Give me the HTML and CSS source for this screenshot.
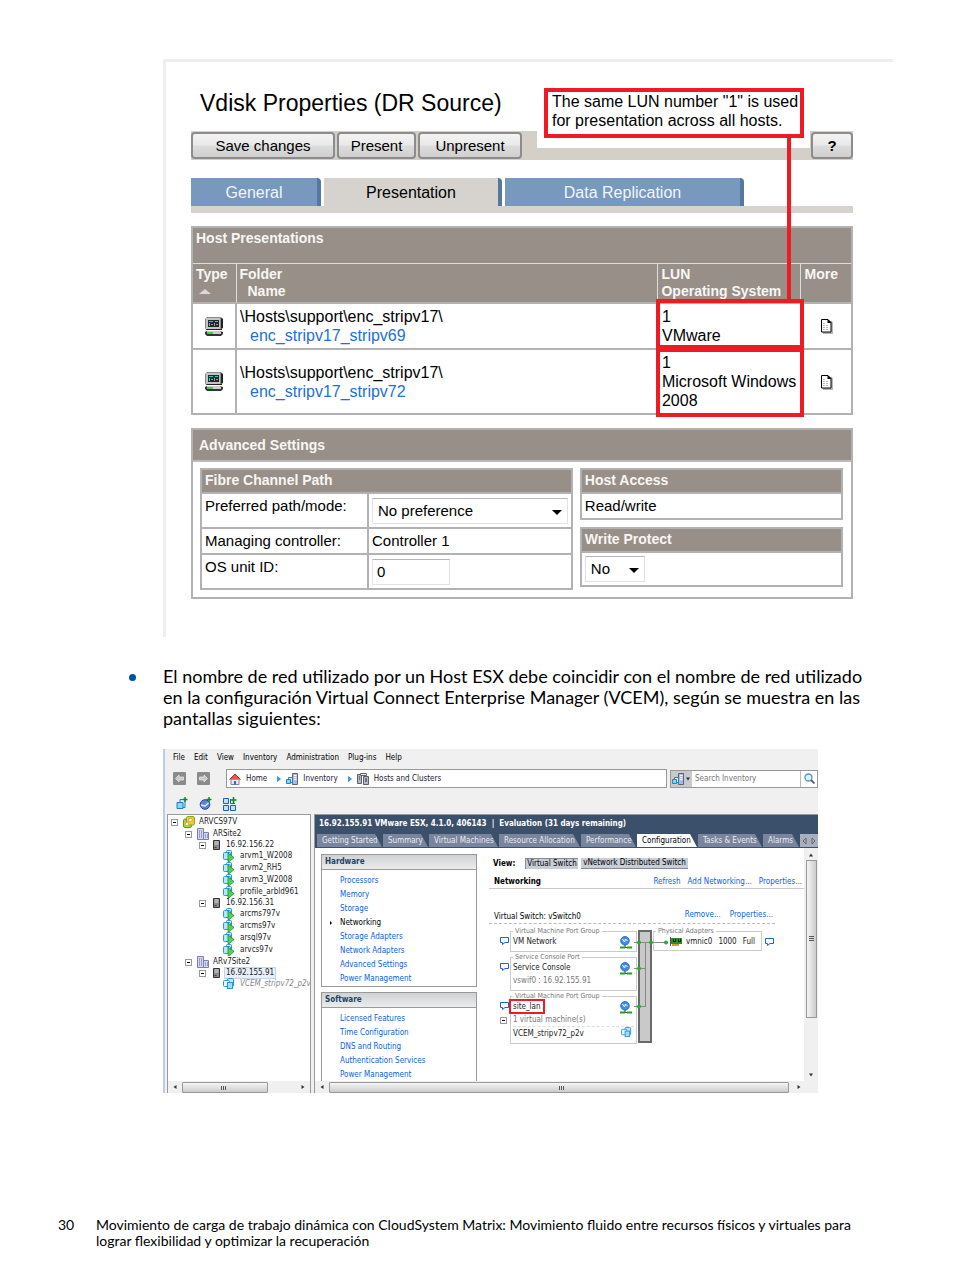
FILE: index.html
```html
<!DOCTYPE html>
<html lang="es">
<head>
<meta charset="utf-8">
<title>Movimiento de carga de trabajo dinámica con CloudSystem Matrix</title>
<link rel="stylesheet" href="styles.css">
</head>
<body>
<svg class="defs" aria-hidden="true">
  <symbol id="i-host" viewBox="0 0 18 19"><path d="M2 0h14l2 2v9l-2 2H1l-1-2V2z" fill="#8a8a8a"/><path d="M1 12h15l1-1v2H2zM16 1l2 1v9h-2z" fill="#222"/><path d="M1 1h14v11H1z" fill="#c4c4c4"/><path d="M3 3h11v7H3z" fill="#1c2b2b"/><path d="M4 4h4v1H4zM10 4h3v1h-3zM4 6h1v3H4z" fill="#1cd0d0"/><path d="M6 7h2v1H6zM9 6h1v3H9zM11 7h2v1h-2z" fill="#b88"/><path d="M2 14h13l3 1v2l-2 2H2l-2-2v-2z" fill="#333"/><path d="M2 14h13l1 1v2H2z" fill="#cdcdcd"/><path d="M2 15h6v2H2z" fill="#4c4"/></symbol>
  <symbol id="i-doc" viewBox="0 0 13 16"><path d="M3 3h9l1 2v11H3z" fill="#b5b5b5"/><path d="M1.500 1.500h6.500l3 3v9.500H1.500z" fill="#fff" stroke="#000"/><path d="M7.500 1v4H11.500z"/><path d="M3 5.500h3M3 7.500h6M3 9.500h6M3 11.500h6" stroke="#bbb" stroke-dasharray="2 1"/></symbol>
  <symbol id="i-vm" viewBox="0 0 12 12"><rect x="3.500" y=".5" width="5" height="7" rx="1" fill="#cfeeff" stroke="#2f93d0"/><rect x=".5" y="2.500" width="7" height="7" rx="1" fill="#b5e6fb" stroke="#2f93d0"/><path d="M5 3l6 4.500L6.500 11.500H5z" fill="#4ed455" stroke="#1f8a28" stroke-width=".8"/></symbol>
  <symbol id="i-vmoff" viewBox="0 0 12 12"><rect x="4.500" y=".5" width="6" height="8" rx="1" fill="#bfe8fb" stroke="#2f93d0"/><rect x=".5" y="2.500" width="6" height="6" rx="1" fill="#e2f6ff" stroke="#2f93d0"/><rect x="4.500" y="4.500" width="5" height="6" fill="#a5dcf5" stroke="#2f93d0"/></symbol>
  <symbol id="i-vc" viewBox="0 0 12 12"><rect x=".5" y="3" width="8" height="8.500" rx="1.500" fill="#a5d650" stroke="#5f9a18"/><rect x="3.500" y=".5" width="8" height="8.500" rx="1.500" fill="#f7c440" stroke="#7fae1c"/><path d="M6 2.500h3v3H6zM2.500 6.500h3v3h-3z" fill="#fffbe0" stroke="#c08a10" stroke-width=".5"/></symbol>
  <symbol id="i-site" viewBox="0 0 12 12"><path d="M.5.500h6v11h-6zM6.500 4.500h5v7h-5z" fill="#d6d8ee" stroke="#7b7fa6"/><path d="M2 3h1m1 0h1M2 5h1m1 0h1M2 7h1m1 0h1M2 9h1m1 0h1M8 7h1m1 0h1M8 9h1m1 0h1" stroke="#5a60a0"/></symbol>
  <symbol id="i-esx" viewBox="0 0 7 10"><path d="M.5.500h6v9h-6z" fill="#8a8a8a" stroke="#333"/><path d="M1.500 2h4M1.500 4h4" stroke="#ddd"/><path d="M1.500 7.500h2" stroke="#444"/></symbol>
  <symbol id="i-inv" viewBox="0 0 12 12"><path d="M6.500.500h5v11h-5z" fill="#b4b9cc" stroke="#5c6380"/><path d="M8 2.500h2.500M8 4.500h2.500M8 6.500h2.500" stroke="#fff"/><path d="M2.500 4.500h4v5h-4z" fill="#d5f0ff" stroke="#1d83cc"/><path d="M.5 6.500h4v4h-4z" fill="#8ed2f7" stroke="#1d83cc"/></symbol>
  <symbol id="i-hc" viewBox="0 0 12 12"><path d="M.5 1.500h4v9h-4zM6.500 3.500h5v8h-5z" fill="#b4b7c4" stroke="#5a5e6c"/><path d="M3.500.500h6v2h-6z" fill="#e6e7ee" stroke="#666"/><path d="M2 4h1M2 6h1M8 6h2M8 8h2" stroke="#333"/></symbol>
  <symbol id="i-home" viewBox="0 0 11 12"><path d="M1.500 6h8v5.500h-8z" fill="#e5e9f2" stroke="#7788a8"/><path d="M0 6.500L5.500 1 11 6.500" fill="#e9574a" stroke="#b42a20"/><path d="M4.500 8h2v3.500h-2z" fill="#3b6ab0"/></symbol>
  <symbol id="i-back" viewBox="0 0 13 13"><rect width="13" height="13" rx="1" fill="#8b8b8b"/><path d="M6 3L2.500 6.500 6 10V8h4.500V5H6z" fill="#c9c9c9" stroke="#efefef" stroke-width=".7"/></symbol>
  <symbol id="i-newvm" viewBox="0 0 12 13"><path d="M4.500 2.500h5v8h-5z" fill="#d2efff" stroke="#1c7fc6"/><path d="M1.500 5.500h6v6h-6z" fill="#8fd2f5" stroke="#1c7fc6"/><path d="M9.500 0v5M7 2.500h5" stroke="#138a17" stroke-width="1.500"/></symbol>
  <symbol id="i-newpool" viewBox="0 0 12 13"><circle cx="5.500" cy="7.500" r="4.800" fill="#6083d8" stroke="#29489c"/><path d="M1.500 8l4 1L9 6" stroke="#e4ecff" fill="none" stroke-width="1.400"/><path d="M9.500 0v5M7 2.500h5" stroke="#138a17" stroke-width="1.500"/></symbol>
  <symbol id="i-newapp" viewBox="0 0 14 14"><path d="M.5 1.500h5v5h-5zM.5 8.500h5v5h-5zM7.500 8.500h5v5h-5z" fill="#bfe0ff" stroke="#1b62c0"/><path d="M7.500 2v4.500H12" stroke="#1b62c0" fill="none"/><path d="M10.500 0v6M7.500 3h6" stroke="#138a17" stroke-width="1.600"/></symbol>
  <symbol id="i-search" viewBox="0 0 11 11"><circle cx="4.500" cy="4.500" r="3.500" fill="#dff1ff" stroke="#5793c8" stroke-width="1.300"/><path d="M7 7l3.500 3.500" stroke="#555f80" stroke-width="1.800"/></symbol>
  <symbol id="i-globe" viewBox="0 0 12 13"><circle cx="5" cy="4.800" r="4.300" fill="#3f8eea" stroke="#1a5cb8" stroke-width=".8"/><path d="M2.500 3l2 3 1-3 2 2" stroke="#fff" fill="none"/><path d="M5 9v2" stroke="#444"/><path d="M0 11.500h5M7 11.500h5" stroke="#19a51d" stroke-width="2"/><path d="M5 11.500h2" stroke="#555"/></symbol>
  <symbol id="i-note" viewBox="0 0 9 8"><path d="M.5.500h8v5H5L2.500 7.500V5.500h-2z" fill="#fff" stroke="#1a66d0"/></symbol>
  <symbol id="i-nic" viewBox="0 0 12 9"><path d="M.5 0v9" stroke="#555"/><path d="M1 1h11v6H1z" fill="#2f8a2a"/><path d="M2 7h7v2H2z" fill="#c9a61c"/><path d="M3 2h3v3H3zM8 2h3v3H8z" fill="#222"/><path d="M4 3h1M9 3h1" stroke="#e9d44a"/></symbol>
  <symbol id="i-left" viewBox="0 0 4 6"><path d="M3.500 1v4L.5 3z" fill="#333"/></symbol>
  <symbol id="i-right" viewBox="0 0 4 6"><path d="M.5 1v4l3-2z" fill="#333"/></symbol>
  <symbol id="i-left-o" viewBox="0 0 5 8"><path d="M4 1v6L1 4z" fill="none" stroke="#667"/></symbol>
  <symbol id="i-right-o" viewBox="0 0 5 8"><path d="M1 1v6l3-3z" fill="none" stroke="#667"/></symbol>
  <symbol id="i-up" viewBox="0 0 6 4"><path d="M1 3.500h4L3 .5z" fill="#333"/></symbol>
  <symbol id="i-down" viewBox="0 0 6 4"><path d="M1 .5h4L3 3.500z" fill="#333"/></symbol>
  <symbol id="i-crumb" viewBox="0 0 4 6"><path d="M.5.500v5L3.500 3z" fill="#3f9ce8" stroke="#1e6fc4" stroke-width=".6"/></symbol>
</svg>

<main class="page">
  <section class="vdisk">
    <h1 class="vdisk-title">Vdisk Properties (DR Source)</h1>
    <div class="actions">
      <button class="btn btn-save">Save changes</button>
      <button class="btn btn-present">Present</button>
      <button class="btn btn-unpresent">Unpresent</button>
      <button class="btn btn-help">?</button>
      <div class="callout-mask"></div>
      <div class="callout-line"></div>
      <p class="callout">The same LUN number "1" is used<br>for presentation across all hosts.</p>
    </div>
    <nav class="tabs">
      <button class="tab tab-general">General</button>
      <button class="tab tab-presentation">Presentation</button>
      <button class="tab tab-replication">Data Replication</button>
    </nav>

    <table class="grid hosts">
      <colgroup><col class="c-type"><col><col class="c-lun"><col class="c-more"></colgroup>
      <thead>
        <tr class="caption-row"><th colspan="4">Host Presentations</th></tr>
        <tr class="head-row"><th>Type<span class="sort"></span></th><th>Folder<br><span class="indent-head">Name</span></th><th>LUN<br>Operating System</th><th>More</th></tr>
      </thead>
      <tbody>
        <tr class="host-row"><td class="mid"><svg class="ic-host"><use href="#i-host"/></svg></td><td>\Hosts\support\enc_stripv17\<br><a class="host-link" href="#">enc_stripv17_stripv69</a></td><td class="marked">1<br>VMware</td><td class="mid"><svg class="ic-doc"><use href="#i-doc"/></svg></td></tr>
        <tr class="host-row tall"><td class="mid"><svg class="ic-host"><use href="#i-host"/></svg></td><td>\Hosts\support\enc_stripv17\<br><a class="host-link" href="#">enc_stripv17_stripv72</a></td><td class="marked">1<br>Microsoft Windows<br>2008</td><td class="mid"><svg class="ic-doc"><use href="#i-doc"/></svg></td></tr>
      </tbody>
    </table>

    <section class="advanced">
      <h2 class="advanced-title">Advanced Settings</h2>
      <div class="advanced-body">
        <table class="grid fibre">
          <colgroup><col class="c-label"><col></colgroup>
          <thead><tr class="sub-row"><th colspan="2">Fibre Channel Path</th></tr></thead>
          <tbody>
            <tr class="r-path"><td><label for="path">Preferred path/mode:</label></td><td><span class="select"><select id="path"><option>No preference</option></select></span></td></tr>
            <tr class="r-ctrl"><td>Managing controller:</td><td>Controller 1</td></tr>
            <tr class="r-unit"><td><label for="unit">OS unit ID:</label></td><td><input id="unit" class="unit" type="text" value="0"></td></tr>
          </tbody>
        </table>
        <div class="side">
          <table class="grid"><thead><tr class="sub-row"><th>Host Access</th></tr></thead><tbody><tr class="r-access"><td>Read/write</td></tr></tbody></table>
          <table class="grid"><thead><tr class="sub-row"><th><label for="protect">Write Protect</label></th></tr></thead><tbody><tr class="r-protect"><td><span class="select small"><select id="protect"><option>No</option></select></span></td></tr></tbody></table>
        </div>
      </div>
    </section>
  </section>

  <ul class="note">
    <li>El nombre de red utilizado por un Host ESX debe coincidir con el nombre de red utilizado<br>en la configuración Virtual Connect Enterprise Manager (VCEM), según se muestra en las<br>pantallas siguientes:</li>
  </ul>

  <section class="client">
    <nav class="menu"><a href="#">File</a><a href="#">Edit</a><a href="#">View</a><a href="#">Inventory</a><a href="#">Administration</a><a href="#">Plug-ins</a><a href="#">Help</a></nav>
    <div class="navbar">
      <button class="icon-btn" aria-label="Back"><svg class="s13"><use href="#i-back"/></svg></button>
      <button class="icon-btn flip" aria-label="Forward"><svg class="s13"><use href="#i-back"/></svg></button>
      <div class="crumbs">
        <svg class="s12"><use href="#i-home"/></svg><a href="#">Home</a>
        <svg class="arrow"><use href="#i-crumb"/></svg><svg class="s12"><use href="#i-inv"/></svg><a href="#">Inventory</a>
        <svg class="arrow"><use href="#i-crumb"/></svg><svg class="s12"><use href="#i-hc"/></svg><a href="#">Hosts and Clusters</a>
      </div>
      <div class="search">
        <button class="search-kind" aria-label="Search type"><svg class="s12"><use href="#i-inv"/></svg><svg class="caret"><use href="#i-down"/></svg></button>
        <input type="text" aria-label="Search Inventory" placeholder="Search Inventory">
        <button class="search-go" aria-label="Search"><svg class="s11"><use href="#i-search"/></svg></button>
      </div>
    </div>
    <div class="tools">
      <button class="icon-btn" aria-label="New virtual machine"><svg class="s13"><use href="#i-newvm"/></svg></button>
      <button class="icon-btn" aria-label="New resource pool"><svg class="s13"><use href="#i-newpool"/></svg></button>
      <button class="icon-btn" aria-label="New vApp"><svg class="s14"><use href="#i-newapp"/></svg></button>
    </div>

    <div class="split">
      <div class="tree-pane">
        <ul class="tree">
          <li><i class="tog"></i><svg class="s12"><use href="#i-vc"/></svg><span>ARVCS97V</span></li>
          <li class="l1"><i class="tog"></i><svg class="s12"><use href="#i-site"/></svg><span>ARSite2</span></li>
          <li class="l2"><i class="tog"></i><svg class="s7"><use href="#i-esx"/></svg><span>16.92.156.22</span></li>
          <li class="l3"><svg class="s12"><use href="#i-vm"/></svg><span>arvm1_W2008</span></li>
          <li class="l3"><svg class="s12"><use href="#i-vm"/></svg><span>arvm2_RH5</span></li>
          <li class="l3"><svg class="s12"><use href="#i-vm"/></svg><span>arvm3_W2008</span></li>
          <li class="l3"><svg class="s12"><use href="#i-vm"/></svg><span>profile_arbld961</span></li>
          <li class="l2"><i class="tog"></i><svg class="s7"><use href="#i-esx"/></svg><span>16.92.156.31</span></li>
          <li class="l3"><svg class="s12"><use href="#i-vm"/></svg><span>arcms797v</span></li>
          <li class="l3"><svg class="s12"><use href="#i-vm"/></svg><span>arcms97v</span></li>
          <li class="l3"><svg class="s12"><use href="#i-vm"/></svg><span>arsql97v</span></li>
          <li class="l3"><svg class="s12"><use href="#i-vm"/></svg><span>arvcs97v</span></li>
          <li class="l1"><i class="tog"></i><svg class="s12"><use href="#i-site"/></svg><span>ARv7Site2</span></li>
          <li class="l2"><i class="tog"></i><svg class="s7"><use href="#i-esx"/></svg><span class="picked">16.92.155.91</span></li>
          <li class="l3 off"><svg class="s12"><use href="#i-vmoff"/></svg><span>VCEM_stripv72_p2v</span></li>
        </ul>
        <div class="hbar tree-bar"><svg class="hx"><use href="#i-left"/></svg><div class="thumb"></div><svg class="hx"><use href="#i-right"/></svg></div>
      </div>

      <div class="main">
        <header class="main-head">
          <h2>16.92.155.91 VMware ESX, 4.1.0, 406143&nbsp; |&nbsp; Evaluation (31 days remaining)</h2>
          <nav class="mtabs">
            <button class="mtab t1">Getting Started</button><button class="mtab t2">Summary</button><button class="mtab t3">Virtual Machines</button><button class="mtab t4">Resource Allocation</button><button class="mtab t5">Performance</button><button class="mtab t6 on">Configuration</button><button class="mtab t7">Tasks &amp; Events</button><button class="mtab t8">Alarms</button>
            <span class="mtab-nav"><svg><use href="#i-left-o"/></svg><svg><use href="#i-right-o"/></svg></span>
          </nav>
        </header>
        <div class="main-body">
          <aside class="cfg">
            <section class="cfg-box">
              <h3>Hardware</h3>
              <ul><li><a href="#">Processors</a></li><li><a href="#">Memory</a></li><li><a href="#">Storage</a></li><li class="current"><a href="#">Networking</a></li><li><a href="#">Storage Adapters</a></li><li><a href="#">Network Adapters</a></li><li><a href="#">Advanced Settings</a></li><li><a href="#">Power Management</a></li></ul>
            </section>
            <section class="cfg-box">
              <h3>Software</h3>
              <ul><li><a href="#">Licensed Features</a></li><li><a href="#">Time Configuration</a></li><li><a href="#">DNS and Routing</a></li><li><a href="#">Authentication Services</a></li><li><a href="#">Power Management</a></li></ul>
            </section>
          </aside>
          <div class="net">
            <div class="view"><b>View:</b><button class="vbtn down">Virtual Switch</button><button class="vbtn wide">vNetwork Distributed Switch</button></div>
            <div class="net-head"><b>Networking</b><span class="links"><a href="#">Refresh</a><a href="#">Add Networking...</a><a href="#">Properties...</a></span></div>
            <div class="switch-head"><span>Virtual Switch: vSwitch0</span><span class="links"><a href="#">Remove...</a><a href="#">Properties...</a></span></div>
            <div class="diagram">
              <div class="ports">
                <div class="port"><svg class="note-ic"><use href="#i-note"/></svg><fieldset class="p1"><legend>Virtual Machine Port Group</legend><div class="prow">VM Network<svg class="globe"><use href="#i-globe"/></svg></div></fieldset></div>
                <div class="port"><svg class="note-ic"><use href="#i-note"/></svg><fieldset class="p2"><legend>Service Console Port</legend><div class="prow">Service Console<svg class="globe"><use href="#i-globe"/></svg></div><div class="prow dim">vswif0 : 16.92.155.91</div></fieldset></div>
                <div class="port"><svg class="note-ic"><use href="#i-note"/></svg><i class="tog port-tog"></i><fieldset class="p3"><legend>Virtual Machine Port Group</legend><div class="prow"><span class="red">site_lan</span><svg class="globe"><use href="#i-globe"/></svg></div><div class="prow dim">1 virtual machine(s)</div><div class="prow vmrow">VCEM_stripv72_p2v<svg class="s11"><use href="#i-vmoff"/></svg></div></fieldset></div>
              </div>
              <div class="bus"></div>
              <div class="adapters"><fieldset><legend>Physical Adapters</legend><div class="prow nic"><svg class="nic-ic"><use href="#i-nic"/></svg><span>vmnic0</span><span>1000</span><span>Full</span></div></fieldset><svg class="note-ic"><use href="#i-note"/></svg></div>
              <svg class="wires" viewBox="0 0 40 84"><g stroke="#888" fill="none"><path d="M2 15.500h34M13.500 16v64M2 41.500h11M2 79.500h11"/></g><g fill="#1fae2b"><circle cx="7" cy="15.500" r="2"/><circle cx="19" cy="15.500" r="2"/><circle cx="34" cy="15.500" r="2"/><circle cx="7" cy="41.500" r="2"/><circle cx="7" cy="79.500" r="2"/></g></svg>
            </div>
          </div>
          <div class="vbar"><svg class="vx"><use href="#i-up"/></svg><div class="vthumb"></div><svg class="vx"><use href="#i-down"/></svg></div>
        </div>
        <div class="hbar main-bar"><svg class="hx"><use href="#i-left"/></svg><div class="thumb"></div><svg class="hx"><use href="#i-right"/></svg></div>
      </div>
    </div>
  </section>
</main>

<footer class="foot"><span class="num">30</span><p>Movimiento de carga de trabajo dinámica con CloudSystem Matrix: Movimiento fluido entre recursos físicos y virtuales para<br>lograr flexibilidad y optimizar la recuperación</p></footer>
</body>
</html>
```
FILE: styles.css
```css
* { box-sizing: border-box; }
body { margin: 0; background: #fff; color: #000; font-family: "Liberation Sans", Arial, sans-serif; }
h1, h2, h3, p, ul { margin: 0; padding: 0; font-weight: normal; }
ul { list-style: none; }
button, input, select { font: inherit; color: inherit; margin: 0; padding: 0; border: 0; background: none; border-radius: 0; }
svg { display: block; flex: none; }
a { color: inherit; text-decoration: none; }
.defs { position: absolute; width: 0; height: 0; }
.page { padding: 59px 61px 0 163px; }

/* Vdisk properties */
.vdisk { border-left: 3px solid #eee; border-top: 3px solid #eee; padding: 28px 40px 38px 25px; font-size: 16px; line-height: 19px; }
.vdisk-title { font-size: 23px; line-height: 26px; padding-left: 9px; }
.actions { position: relative; display: flex; gap: 2px; height: 29px; margin-top: 15px; background: #d4d0c8; }
.btn { height: 27px; margin-top: 1px; border: 2px solid #8c8c8c; border-radius: 4px; background: linear-gradient(#f3f3f3, #e9e9e9 48%, #dcdcdc 52%, #d0d0d0); font-size: 15px; }
.btn-save { width: 144px; }
.btn-present { width: 79px; }
.btn-unpresent { width: 104px; }
.btn-help { width: 42px; margin-left: auto; font-weight: bold; }
.callout-mask { position: absolute; top: 0; right: 43px; width: 273px; height: 17px; background: #fff; }
.callout { position: absolute; top: -43px; right: 49px; width: 260px; height: 50px; padding: 0 4px; border: 4px solid #ed1c24; background: #fff; white-space: nowrap; }
.callout-line { position: absolute; z-index: 2; top: 6px; right: 62px; width: 4px; height: 164px; background: #ed1c24; }
.tabs { display: flex; gap: 3px; margin-top: 18px; border-bottom: 7px solid #d6d3ce; }
.tab { height: 28px; background: #7799bd; color: #f1f5fa; border-right: 4px solid #54789f; border-top-right-radius: 4px; }
.tab-general { width: 130px; }
.tab-presentation { width: 178px; background: #d6d3ce; color: #000; }
.tab-replication { width: 239px; }

.grid { width: 100%; border-collapse: collapse; table-layout: fixed; border: 2px solid #b2b2b2; }
.grid th { background: #978f88; color: #f8f6f3; font-size: 14px; line-height: 17px; text-align: left; vertical-align: top; border: 1px solid #ddd; padding: 2px 3px; white-space: nowrap; }
.grid td { border: 2px solid #b2b2b2; padding: 3px; vertical-align: middle; white-space: nowrap; }
.hosts { margin-top: 13px; }
.c-type { width: 44px; }
.c-lun { width: 143px; }
.c-more { width: 51px; }
.caption-row { height: 36px; }
.head-row { height: 40px; }
.sort { display: block; width: 0; margin: 6px 0 0 3px; border: 6px solid transparent; border-top: 0; border-bottom: 5px solid #ddd8d2; }
.indent-head { margin-left: 8px; }
.host-row { height: 46px; }
.host-row.tall { height: 65px; }
.host-link { margin-left: 10px; color: #1f6fd6; }
.grid .marked { position: relative; }
.marked::after { content: ""; position: absolute; inset: -5px -4px -4px -3px; border: 4px solid #ed1c24; }
.mid svg { margin: 0 auto; }
.ic-host { width: 18px; height: 19px; }
.ic-doc { width: 13px; height: 16px; }

.advanced { margin-top: 13px; border: 2px solid #b2b2b2; font-size: 15px; }
.advanced-title { background: #978f88; color: #f8f6f3; font-size: 14px; font-weight: bold; line-height: 30px; padding-left: 6px; border-bottom: 2px solid #bbb; }
.advanced-body { display: flex; align-items: flex-start; gap: 7px; padding: 6px 8px 7px 7px; }
.fibre { flex: 372 1 0; }
.side { flex: 264 1 0; display: flex; flex-direction: column; gap: 7px; }
.c-label { width: 167px; }
.sub-row { height: 24px; }
.r-path { height: 35px; }
.r-path td:first-child, .r-unit td:first-child { vertical-align: top; }
.r-ctrl { height: 26px; }
.r-unit { height: 35px; }
.r-access { height: 26px; }
.r-protect { height: 34px; }
.r-path td, .r-ctrl td, .r-unit td, .r-access td, .r-protect td { padding-top: 0; padding-bottom: 0; line-height: 24px; }
.select { position: relative; display: block; height: 26px; border: 1px solid #dfe2ea; border-top-color: #b4b6bd; }
.select select { appearance: none; width: 100%; height: 24px; padding-left: 5px; }
.select::after { content: ""; position: absolute; right: 5px; top: 11px; border: 5px solid transparent; border-top-color: #000; border-bottom: 0; pointer-events: none; }
.select.small { width: 60px; }
.unit { display: block; width: 78px; height: 26px; padding: 0 4px; border: 1px solid #dfe2ea; border-top-color: #b4b6bd; }

/* Bullet paragraph */
.note { margin-top: 29px; font-family: Lato, sans-serif; font-size: 18px; line-height: 21px; white-space: nowrap; }
.note li { position: relative; }
.note li::before { content: ""; position: absolute; left: -34px; top: 8px; width: 7px; height: 7px; border-radius: 50%; background: #00539f; }

/* vSphere client */
.client { margin: 20px 75px 0 0; border-left: 2px solid #b9cfe8; padding-left: 2px; background: #f0f0f0; font-family: "DejaVu Sans Condensed", "DejaVu Sans", sans-serif; font-size: 8px; line-height: 12px; white-space: nowrap; }
.menu { display: flex; gap: 9px; padding: 3px 0 0 6px; height: 20px; }
.navbar { display: flex; align-items: center; height: 19px; padding-left: 6px; }
.icon-btn { margin-right: 11px; }
.flip { transform: scaleX(-1); }
.navbar .flip { margin: 0 16px 0 0; }
.s7 { width: 7px; height: 10px; }
.s11 { width: 11px; height: 11px; }
.s12 { width: 12px; height: 12px; }
.s13 { width: 13px; height: 13px; }
.s14 { width: 14px; height: 14px; }
.crumbs { flex: 1; display: flex; align-items: center; height: 19px; padding-left: 2px; background: #fff; border: 1px solid #999; color: #223; }
.crumbs .s12 { margin-right: 5px; }
.crumbs a { margin-right: 10px; }
.arrow { width: 4px; height: 6px; margin-right: 5px; }
.search { display: flex; width: 148px; height: 18px; margin-left: 3px; border: 1px solid #999; background: #fff; }
.search-kind { display: flex; align-items: center; gap: 1px; width: 21px; padding-left: 1px; background: #c9c9c9; }
.caret { width: 6px; height: 4px; }
.search input { flex: 1; min-width: 0; padding-left: 3px; }
.search input::placeholder { color: #777; opacity: 1; }
.search-go { display: flex; align-items: center; justify-content: center; width: 17px; border-left: 1px solid #bbb; }
.tools { display: flex; height: 26px; padding: 5px 0 0 8px; }

.split { display: flex; gap: 3px; }
.tree-pane { width: 144px; display: flex; flex-direction: column; border: 1px solid #999; border-bottom: 0; background: #fff; overflow: hidden; }
.tree { display: grid; grid-auto-rows: 1fr; height: 174px; margin-top: 1px; color: #222; }
.tree li { display: flex; align-items: center; padding-left: 3px; }
.tree li.l1 { padding-left: 17px; }
.tree li.l2 { padding-left: 31px; }
.tree li.l3 { padding-left: 55px; }
.tree svg { margin-right: 3px; }
.tree .l3 svg { margin-right: 4px; }
.tree .s7 { margin: 0 5px 0 2px; }
.tree span { line-height: 10px; padding: 0 1px; }
.tree .picked { background: #e6effa; outline: 1px solid #c3d5ea; }
.off { color: #888; font-style: italic; }
.tog { position: relative; flex: none; width: 7px; height: 7px; margin-right: 5px; border: 1px solid #999; background: #fff; }
.tog::after { content: ""; position: absolute; left: 1px; right: 1px; top: 2px; height: 1px; background: #000; }
.hbar { display: flex; align-items: center; height: 12px; background: #f0f0f0; }
.tree-bar { margin-top: auto; }
.hx { width: 4px; height: 6px; margin: 0 5px; }
.thumb { height: 11px; border: 1px solid #999; border-radius: 1px; background: linear-gradient(#f5f5f5, #ccc); position: relative; }
.thumb::after { content: ""; position: absolute; left: 45%; top: 3px; width: 5px; height: 4px; background: repeating-linear-gradient(90deg, #555 0 1px, transparent 1px 2px); }
.main-bar .thumb::after { left: 50%; }
.tree-bar .thumb { width: 86px; margin-right: auto; }
.main-bar .thumb { flex: 1; margin-right: 3px; }
.main-bar .hx:last-child { margin-right: 17px; }

.main { flex: 1; min-width: 0; height: 279px; display: flex; flex-direction: column; border-top: 1px solid #999; border-left: 1px solid #999; }
.main-head { height: 33px; background: #3a506b; color: #fff; }
.main-head h2 { height: 19px; padding: 3px 0 0 4px; font-size: 8px; font-weight: bold; line-height: 12px; }
.mtabs { display: flex; padding-left: 2px; }
.mtab { height: 13px; margin-right: 1px; padding-left: 5px; text-align: left; overflow: hidden; background: #7a859d; color: #e8ebf2; line-height: 12px; clip-path: polygon(0 0, calc(100% - 7px) 0, 100% 100%, 0 100%); }
.mtab.on { background: #fff; color: #000; }
.t1 { width: 65px; }
.t2 { width: 45px; }
.t3 { width: 69px; }
.t4 { width: 81px; }
.t5 { width: 55px; }
.t6 { width: 60px; }
.t7 { width: 64px; }
.t8 { width: 36px; }
.mtab-nav { display: flex; flex: 1; align-items: center; justify-content: center; gap: 4px; background: #a9b0bd; }
.mtab-nav svg { width: 5px; height: 8px; }
.main-body { flex: 1; min-height: 0; display: flex; background: #fff; overflow: hidden; }
.cfg { width: 162px; flex: none; padding: 6px 0 0 6px; display: flex; flex-direction: column; gap: 5px; }
.cfg-box { border: 1px solid #999; }
.cfg-box h3 { height: 15px; padding-left: 3px; font-size: 8px; line-height: 14px; font-weight: bold; color: #1c4466; background: linear-gradient(#cfd1d3, #ececec); border-bottom: 1px solid #999; }
.cfg-box ul { padding: 4px 0 0 18px; line-height: 14px; color: #0b5fe0; }
.cfg-box .current { position: relative; color: #000; }
.current::before { content: ""; position: absolute; left: -10px; top: 5px; border: 2px solid transparent; border-left-color: #000; border-right: 0; }
.net { flex: 1; min-width: 0; padding: 10px 0 0 12px; }
.view { display: flex; align-items: center; padding-left: 4px; height: 11px; }
.view b { width: 32px; }
.vbtn { height: 11px; width: 53px; margin-right: 3px; line-height: 10px; background: #c7ced8; border-bottom: 1px solid #889; overflow: hidden; }
.vbtn.down { border: 1px solid #889; border-right: 0; border-bottom: 0; }
.vbtn.wide { width: 107px; }
.net-head { display: flex; justify-content: space-between; margin-top: 6px; padding: 1px 2px 0 5px; border-bottom: 1px solid #ccc; }
.links { display: flex; gap: 7px; color: #0b5fe0; }
.switch-head { display: flex; justify-content: space-between; margin: 21px 29px 0 0; padding: 1px 2px 0 5px; border-bottom: 1px dashed #bbb; }
.switch-head .links { gap: 9px; margin-top: -2px; }
.diagram { position: relative; display: flex; align-items: flex-start; padding: 3px 0 0 11px; }
.ports { width: 137px; display: flex; flex-direction: column; gap: 1px; }
.port { position: relative; padding-left: 10px; }
.port > .note-ic { position: absolute; left: 0; top: 10px; }
.port-tog { position: absolute; left: 0; top: 25px; }
.note-ic { width: 9px; height: 8px; }
fieldset { min-width: 0; margin: 0; padding: 0 2px; border: 1px solid #ccc; color: #222; }
.p1 { height: 25px; }
.p2 { height: 38px; }
.p3 { height: 52px; }
legend { padding: 0 2px; font-size: 7px; line-height: 8px; color: #777; }
.prow { position: relative; height: 13px; line-height: 13px; }
.dim { color: #777; }
.globe { position: absolute; right: 2px; top: 1px; width: 12px; height: 13px; }
.red { outline: 2px solid #ed1c24; display: inline-block; line-height: 11px; padding: 0 2px; margin-left: -2px; }
.vmrow { border-top: 1px dashed #ddd; display: flex; justify-content: space-between; padding-right: 2px; }
.bus { width: 14px; height: 113px; margin: 3px 0 0 1px; border: 2px solid #696969; background: #c9c9c9; }
.adapters { display: flex; align-items: center; margin-left: 1px; }
.adapters fieldset { width: 109px; height: 24px; margin-right: 3px; }
.adapters > .note-ic { margin-top: 5px; }
.nic { display: flex; align-items: center; gap: 6px; padding-left: 14px; }
.nic-ic { width: 12px; height: 9px; margin-right: -2px; }
.wires { position: absolute; left: 143px; top: 3px; width: 40px; height: 84px; }
.vbar { width: 14px; display: flex; flex-direction: column; align-items: center; justify-content: space-between; gap: 3px; padding: 5px 0 4px; background: #f0f0f0; }
.vx { width: 6px; height: 4px; }
.vthumb { position: relative; width: 11px; height: 158px; margin-bottom: auto; border: 1px solid #999; background: linear-gradient(90deg, #f5f5f5, #ccc); }
.vthumb::after { content: ""; position: absolute; left: 2px; top: 75px; width: 5px; height: 5px; background: repeating-linear-gradient(#555 0 1px, transparent 1px 2px); }

.foot { display: flex; margin-top: 124px; padding-left: 58px; font-family: Lato, sans-serif; font-size: 14px; line-height: 16px; white-space: nowrap; }
.num { width: 38px; }
```
